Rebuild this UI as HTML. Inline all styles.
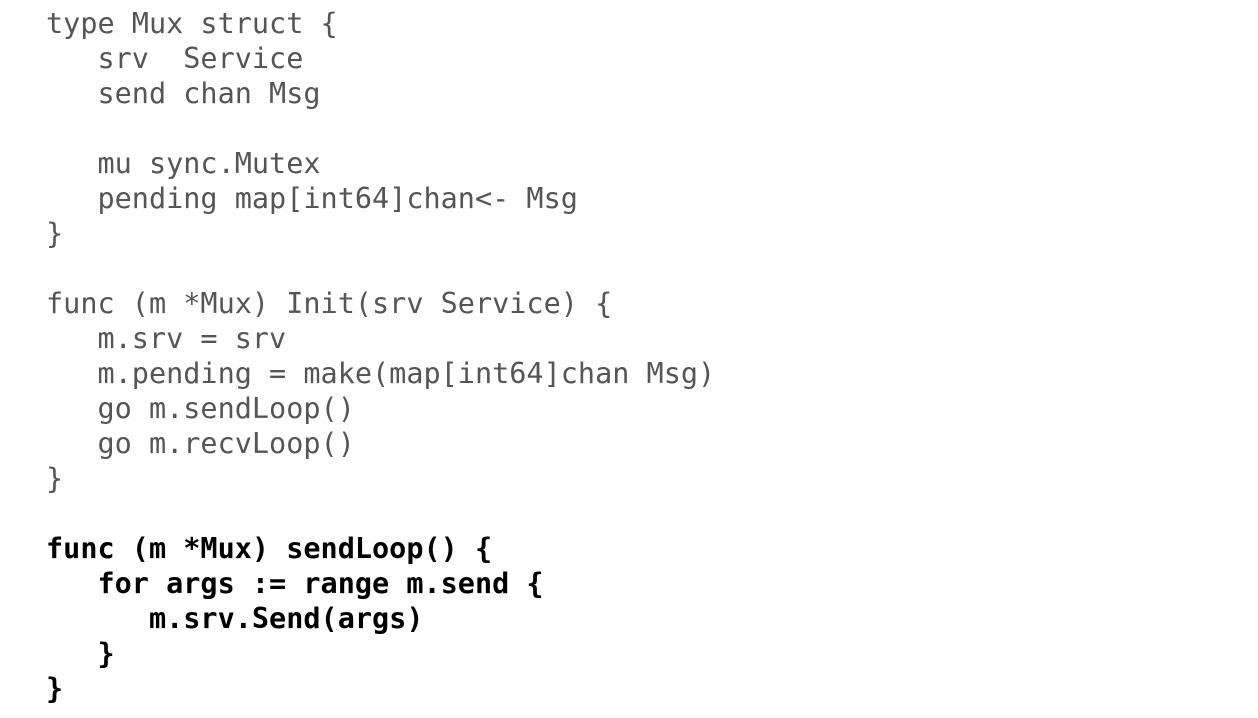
<!DOCTYPE html>
<html><head><meta charset="utf-8"><style>
html,body{margin:0;padding:0;background:#fff;width:1258px;height:718px;overflow:hidden}
pre{margin:0;position:absolute;left:46px;top:6px;font-family:"DejaVu Sans Mono","Liberation Mono",monospace;font-size:28.5px;line-height:35.0px;color:#555;letter-spacing:0}
b{color:#000;font-weight:bold}
</style></head><body>
<pre>type Mux struct {
   srv  Service
   send chan Msg

   mu sync.Mutex
   pending map[int64]chan&lt;- Msg
}

func (m *Mux) Init(srv Service) {
   m.srv = srv
   m.pending = make(map[int64]chan Msg)
   go m.sendLoop()
   go m.recvLoop()
}

<b>func (m *Mux) sendLoop() {
   for args := range m.send {
      m.srv.Send(args)
   }
}</b></pre>
</body></html>
